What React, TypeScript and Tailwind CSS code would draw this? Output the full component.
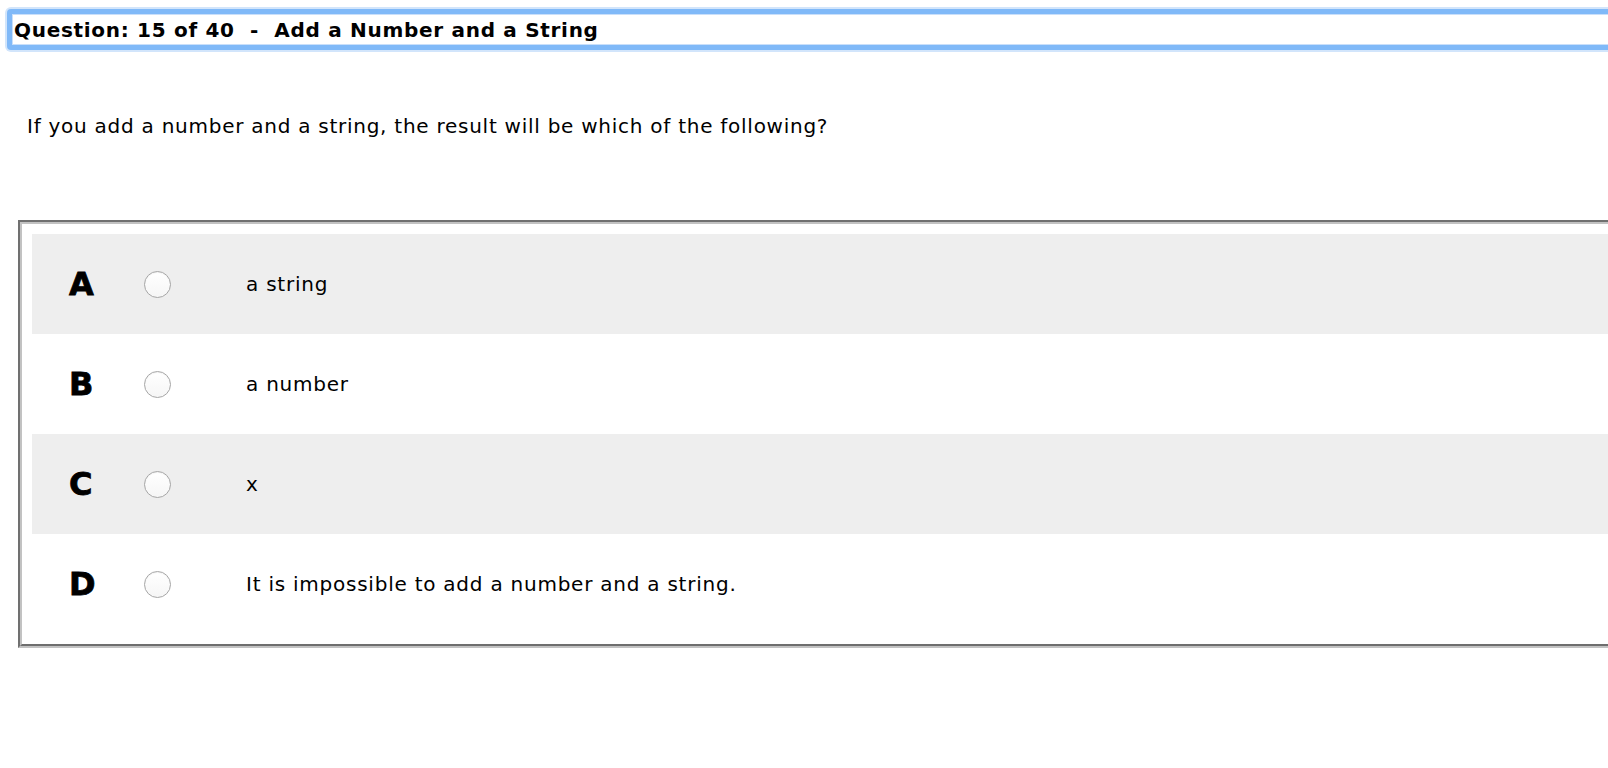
import React from "react";

const options = [
  { letter: "A", text: "a string", shaded: true },
  { letter: "B", text: "a number", shaded: false },
  { letter: "C", text: "x", shaded: true },
  { letter: "D", text: "It is impossible to add a number and a string.", shaded: false },
];

function Radio() {
  return (
    <div className="w-[27px] h-[27px] rounded-full border border-[#a6a6a6] bg-gradient-to-b from-white to-[#f6f6f6] shadow-[inset_0_1px_1px_rgba(0,0,0,0.05)] shrink-0" />
  );
}

export default function App() {
  return (
    <div
      className="w-[1608px] h-[768px] overflow-hidden bg-white text-black"
      style={{ fontFamily: '"DejaVu Sans", Verdana, sans-serif' }}
    >
      <div className="pt-[7px] pl-[5px] w-[1640px]">
        <div className="p-[2px] bg-[#d2e5fb] rounded-[6px]">
          <div className="p-[5px] bg-[#80b9f8] rounded-[4px]">
            <div className="bg-white border border-[#c9dffa] h-[31px] flex items-center pl-[1px] font-bold text-[20px] tracking-[0.7px] leading-none whitespace-pre">
              {"Question: 15 of 40  -  Add a Number and a String"}
            </div>
          </div>
        </div>
      </div>

      <div className="pl-[27px] mt-[62px] text-[20px] tracking-[0.74px] leading-[24px]">
        If you add a number and a string, the result will be which of the following?
      </div>

      <div className="ml-[18px] mt-[82px] w-[1640px] border-t-2 border-l-2 border-b-2 border-t-[#707070] border-l-[#707070] border-b-[#c2c2c2]">
        <div className="border-t-2 border-l-2 border-b-2 border-t-[#c2c2c2] border-l-[#c2c2c2] border-b-[#6e6e6e] p-[10px]">
          {options.map((o) => (
            <div
              key={o.letter}
              className={`h-[100px] flex items-center ${o.shaded ? "bg-[#eeeeee]" : "bg-white"}`}
            >
              <div className="w-[112px] pl-[37px] font-bold text-[32px] leading-none [-webkit-text-stroke:0.8px_black]">
                {o.letter}
              </div>
              <Radio />
              <div className="ml-[75px] text-[20px] tracking-[0.76px] leading-none">{o.text}</div>
            </div>
          ))}
        </div>
      </div>
    </div>
  );
}
